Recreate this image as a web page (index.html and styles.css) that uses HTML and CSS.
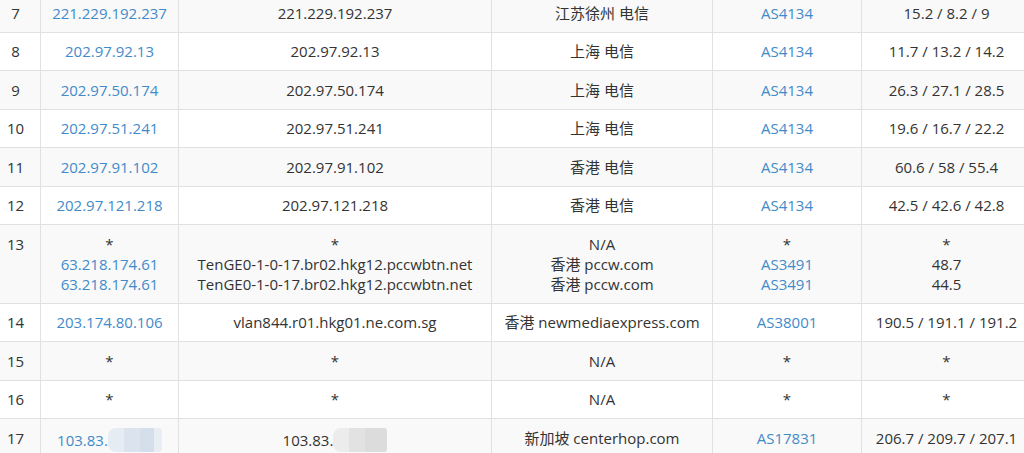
FILE: index.html
```html
<!DOCTYPE html>
<html lang="zh-CN">
<head>
    <meta charset="UTF-8">
    <meta name="viewport" content="width=device-width, initial-scale=1.0">
    <title>路由追踪</title>
    <link rel="stylesheet" href="styles.css">
</head>
<body>
    <div class="trace-wrap">
        <table class="trace">
            <colgroup>
                <col class="c-hop">
                <col class="c-ip">
                <col class="c-host">
                <col class="c-geo">
                <col class="c-as">
                <col class="c-time">
            </colgroup>
            <tbody>
                <tr>
                    <td>7</td>
                    <td><a href="#">221.229.192.237</a></td>
                    <td>221.229.192.237</td>
                    <td>江苏徐州 电信</td>
                    <td><a href="#">AS4134</a></td>
                    <td>15.2 / 8.2 / 9</td>
                </tr>
                <tr>
                    <td>8</td>
                    <td><a href="#">202.97.92.13</a></td>
                    <td>202.97.92.13</td>
                    <td>上海 电信</td>
                    <td><a href="#">AS4134</a></td>
                    <td>11.7 / 13.2 / 14.2</td>
                </tr>
                <tr>
                    <td>9</td>
                    <td><a href="#">202.97.50.174</a></td>
                    <td>202.97.50.174</td>
                    <td>上海 电信</td>
                    <td><a href="#">AS4134</a></td>
                    <td>26.3 / 27.1 / 28.5</td>
                </tr>
                <tr>
                    <td>10</td>
                    <td><a href="#">202.97.51.241</a></td>
                    <td>202.97.51.241</td>
                    <td>上海 电信</td>
                    <td><a href="#">AS4134</a></td>
                    <td>19.6 / 16.7 / 22.2</td>
                </tr>
                <tr>
                    <td>11</td>
                    <td><a href="#">202.97.91.102</a></td>
                    <td>202.97.91.102</td>
                    <td>香港 电信</td>
                    <td><a href="#">AS4134</a></td>
                    <td>60.6 / 58 / 55.4</td>
                </tr>
                <tr>
                    <td>12</td>
                    <td><a href="#">202.97.121.218</a></td>
                    <td>202.97.121.218</td>
                    <td>香港 电信</td>
                    <td><a href="#">AS4134</a></td>
                    <td>42.5 / 42.6 / 42.8</td>
                </tr>
                <tr>
                    <td>13</td>
                    <td>*<br><a href="#">63.218.174.61</a><br><a href="#">63.218.174.61</a></td>
                    <td>*<br>TenGE0-1-0-17.br02.hkg12.pccwbtn.net<br>TenGE0-1-0-17.br02.hkg12.pccwbtn.net</td>
                    <td>N/A<br>香港 pccw.com<br>香港 pccw.com</td>
                    <td>*<br><a href="#">AS3491</a><br><a href="#">AS3491</a></td>
                    <td>*<br>48.7<br>44.5</td>
                </tr>
                <tr>
                    <td>14</td>
                    <td><a href="#">203.174.80.106</a></td>
                    <td>vlan844.r01.hkg01.ne.com.sg</td>
                    <td>香港 newmediaexpress.com</td>
                    <td><a href="#">AS38001</a></td>
                    <td>190.5 / 191.1 / 191.2</td>
                </tr>
                <tr>
                    <td>15</td>
                    <td>*</td>
                    <td>*</td>
                    <td>N/A</td>
                    <td>*</td>
                    <td>*</td>
                </tr>
                <tr>
                    <td>16</td>
                    <td>*</td>
                    <td>*</td>
                    <td>N/A</td>
                    <td>*</td>
                    <td>*</td>
                </tr>
                <tr>
                    <td>17</td>
                    <td><a href="#">103.83.<span class="masked masked-link"></span></a></td>
                    <td>103.83.<span class="masked"></span></td>
                    <td>新加坡 centerhop.com</td>
                    <td><a href="#">AS17831</a></td>
                    <td>206.7 / 209.7 / 207.1</td>
                </tr>
            </tbody>
        </table>
    </div>
</body>
</html>
```

FILE: styles.css
```css
body {
    margin: 0;
    background-color: #fff;
    font-family: 'Open Sans', 'Noto Sans CJK SC', sans-serif;
    font-size: 15px;
    color: #333;
    overflow: hidden;
}
.trace-wrap {
    overflow: hidden;
}
.trace {
    width: 1041px;
    margin: -7px 0 0 -10px;
    border-collapse: collapse;
    table-layout: fixed;
}
.c-hop { width: 50px; }
.c-ip { width: 138px; }
.c-host { width: 313px; }
.c-geo { width: 221px; }
.c-as { width: 149px; }
.c-time { width: 170px; }
.trace td {
    padding: 8.75px 4px;
    line-height: 20px;
    text-align: center;
    vertical-align: top;
    border: 1px solid #e1e1e1;
    white-space: nowrap;
}
.trace tr:nth-child(odd) {
    background-color: #f9f9f9;
}
.trace a {
    color: #428bca;
    text-decoration: none;
}
/* blurred part of the last hop address */
.masked {
    display: inline-block;
    width: 54px;
    height: 24px;
    vertical-align: -6px;
    border-radius: 8px 3px 3px 8px;
    background:
        linear-gradient(90deg, #ececec 0 30%, #e2e2e2 30% 60%, #dcdcdc 60% 100%);
}
.masked-link {
    background:
        linear-gradient(90deg, #e6ecf3 0 30%, #dbe4ee 30% 60%, #d5dfeb 60% 85%, #e9eef4 85% 100%);
}
```
